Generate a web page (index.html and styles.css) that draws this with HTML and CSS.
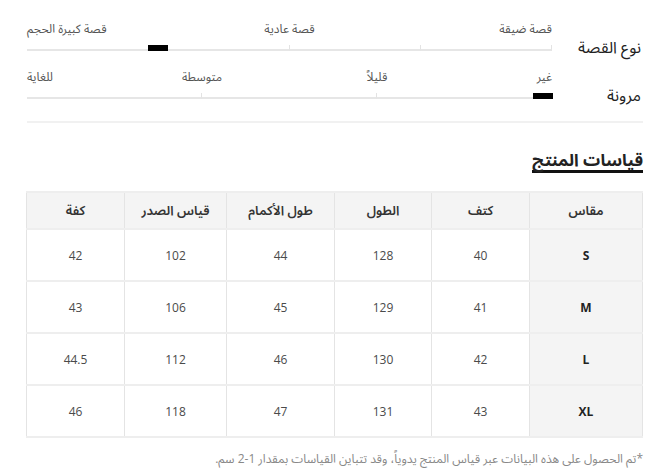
FILE: index.html
```html
<!DOCTYPE html>
<html lang="ar" dir="rtl">
<head>
<meta charset="utf-8">
<link rel="stylesheet" href="styles.css">
</head>
<body>
<div class="page">
  <div class="fit-row">
    <div class="fit-label">نوع القصة</div>
    <div class="slider">
      <div class="marks marks-fit">
        <span class="mark m-start">قصة ضيقة</span>
        <span class="mark m-mid">قصة عادية</span>
        <span class="mark m-end">قصة كبيرة الحجم</span>
      </div>
      <div class="track">
        <span class="seg"></span><span class="seg"></span><span class="seg"></span><span class="seg"></span>
        <span class="thumb" style="right: calc(75% - 10px)"></span>
      </div>
    </div>
  </div>

  <div class="fit-row row2">
    <div class="fit-label">مرونة</div>
    <div class="slider">
      <div class="marks marks-stretch">
        <span class="mark s1">غير</span>
        <span class="mark s2">قليلاً</span>
        <span class="mark s3">متوسطة</span>
        <span class="mark s4">للغاية</span>
      </div>
      <div class="track">
        <span class="seg"></span><span class="seg"></span><span class="seg"></span>
        <span class="thumb" style="right: -1px"></span>
      </div>
    </div>
  </div>

  <hr class="sep">

  <h2 class="title"><span>قياسات المنتج</span></h2>

  <table class="sizes">
    <colgroup>
      <col class="c1"><col class="c2"><col class="c3"><col class="c4"><col class="c5"><col class="c6">
    </colgroup>
    <thead>
      <tr><th>مقاس</th><th>كتف</th><th>الطول</th><th>طول الأكمام</th><th>قياس الصدر</th><th>كفة</th></tr>
    </thead>
    <tbody>
      <tr><td class="sz">S</td><td>40</td><td>128</td><td>44</td><td>102</td><td>42</td></tr>
      <tr><td class="sz">M</td><td>41</td><td>129</td><td>45</td><td>106</td><td>43</td></tr>
      <tr><td class="sz">L</td><td>42</td><td>130</td><td>46</td><td>112</td><td>44.5</td></tr>
      <tr><td class="sz">XL</td><td>43</td><td>131</td><td>47</td><td>118</td><td>46</td></tr>
    </tbody>
  </table>

  <p class="note">*تم الحصول على هذه البيانات عبر قياس المنتج يدوياً، وقد تتباين القياسات بمقدار 1-2 سم.</p>
</div>
</body>
</html>
```

FILE: styles.css
```css
* { box-sizing: border-box; }
html, body { margin: 0; padding: 0; background: #fff; }
body {
  font-family: "Open Sans", "Noto Sans Arabic", "Noto Kufi Arabic", "DejaVu Sans", sans-serif;
  color: #333;
}
.page {
  padding: 22px 19px 0 27px;
  width: 662px;
}
.fit-row {
  display: flex;
  align-items: flex-end;
}
.row2 { margin-top: 19px; }
.fit-label {
  width: 91px;
  padding-right: 2px;
  font-size: 16px;
  line-height: 20px;
  color: #222;
  margin-bottom: -6px;
}
.slider {
  width: 525px;
}
.marks {
  display: grid;
  font-size: 12px;
  line-height: 14px;
  color: #555;
  white-space: nowrap;
}
.marks-fit { grid-template-columns: 1fr auto 1fr; }
.marks-fit .m-start { justify-self: start; }
.marks-fit .m-mid { justify-self: center; }
.marks-fit .m-end { justify-self: end; }
.marks-stretch { grid-template-columns: repeat(6, 1fr); }
.marks-stretch .s1 { grid-column: 1; justify-self: start; }
.marks-stretch .s2 { grid-column: 2 / span 2; justify-self: center; }
.marks-stretch .s3 { grid-column: 4 / span 2; justify-self: center; }
.marks-stretch .s4 { grid-column: 6; justify-self: end; }
.track {
  position: relative;
  display: flex;
  height: 6px;
  margin-top: 9px;
}
.seg {
  flex: 1;
  border-bottom: 2px solid #e6e6e6;
  border-right: 1px solid #e3e3e3;
  height: 6px;
}
.seg:last-of-type { border-left: 1px solid #e3e3e3; }
.thumb {
  position: absolute;
  bottom: 0;
  width: 20px;
  height: 6px;
  background: #000;
}
.sep {
  border: 0;
  border-top: 2px solid #f1f1f1;
  margin: 22px 0 0;
  height: 0;
}
.title {
  margin: 27px 0 0;
  text-align: right;
  font-size: 17px;
  line-height: 20px;
  font-weight: 700;
  color: #222;
}
.title span {
  display: inline-block;
  border-bottom: 3px solid #111;
}
.sizes {
  margin-top: 18px;
  width: 616px;
  table-layout: fixed;
  border-collapse: collapse;
  font-size: 12px;
  color: #4a4a4a;
}
.c1 { width: 113px; }
.c2 { width: 98px; }
.c3 { width: 97px; }
.c4 { width: 108px; }
.c5 { width: 102px; }
.c6 { width: 98px; }
.sizes th, .sizes td {
  text-align: center;
  border-left: 1px solid #e4e4e4;
  border-right: 1px solid #e4e4e4;
  border-top: 2px solid #eeeeee;
  border-bottom: 2px solid #eeeeee;
  padding: 0;
}
.sizes th {
  height: 37px;
  background: #f4f4f4;
  font-size: 13px;
  font-weight: 600;
  color: #333;
}
.sizes td { height: 52px; }
.sizes td.sz {
  background: #f4f4f4;
  font-weight: 700;
  color: #222;
}
.note {
  margin: 9px 0 0;
  font-size: 12px;
  color: #888;
  text-align: right;
}
```
